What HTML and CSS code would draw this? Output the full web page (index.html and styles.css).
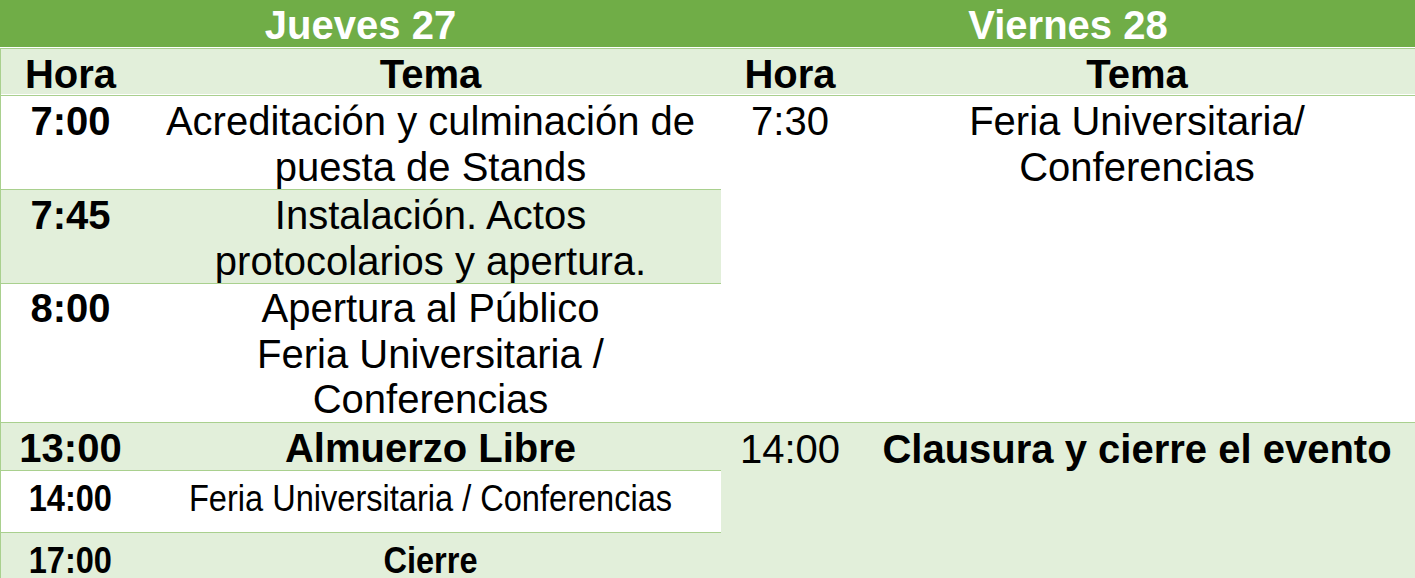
FILE: index.html
```html
<!DOCTYPE html>
<html lang="es">
<head>
<meta charset="utf-8">
<title>Programa</title>
<link rel="stylesheet" href="styles.css">
</head>
<body>
<div class="schedule">
  <section class="day day--thu">
    <div class="banner">Jueves 27</div>
    <div class="table">
      <div class="row row--head">
        <div class="cell">Hora</div>
        <div class="cell">Tema</div>
      </div>
      <div class="row row--two">
        <div class="cell time">7:00</div>
        <div class="cell topic">Acreditación y culminación de<br>puesta de Stands</div>
      </div>
      <div class="row row--two row--alt">
        <div class="cell time">7:45</div>
        <div class="cell topic">Instalación. Actos<br>protocolarios y apertura.</div>
      </div>
      <div class="row row--three">
        <div class="cell time">8:00</div>
        <div class="cell topic">Apertura al Público<br>Feria Universitaria /<br>Conferencias</div>
      </div>
      <div class="row row--one row--alt">
        <div class="cell time">13:00</div>
        <div class="cell topic topic--bold">Almuerzo Libre</div>
      </div>
      <div class="row row--narrow">
        <div class="cell time"><span class="condensed">14:00</span></div>
        <div class="cell topic"><span class="condensed">Feria Universitaria / Conferencias</span></div>
      </div>
      <div class="row row--end row--alt">
        <div class="cell time"><span class="condensed">17:00</span></div>
        <div class="cell topic topic--bold"><span class="condensed">Cierre</span></div>
      </div>
    </div>
  </section>
  <section class="day day--fri">
    <div class="banner">Viernes 28</div>
    <div class="table">
      <div class="row row--head">
        <div class="cell">Hora</div>
        <div class="cell">Tema</div>
      </div>
      <div class="row row--tall">
        <div class="cell time time--plain">7:30</div>
        <div class="cell topic">Feria Universitaria/<br>Conferencias</div>
      </div>
      <div class="row row--last row--alt">
        <div class="cell time time--plain">14:00</div>
        <div class="cell topic topic--bold">Clausura y cierre el evento</div>
      </div>
    </div>
  </section>
</div>
</body>
</html>
```

FILE: styles.css
```css
* {
  box-sizing: border-box;
  margin: 0;
  padding: 0;
}

body {
  margin: 0;
  width: 1415px;
  height: 578px;
  overflow: hidden;
  background: #ffffff;
  color: #000000;
  font-family: "Liberation Sans", Arial, sans-serif;
}

.schedule {
  display: flex;
  height: 578px;
}

.day {
  display: flex;
  flex-direction: column;
}

.day--thu {
  width: 721px;
}

.day--fri {
  flex: 1;
}

.banner {
  height: 48px;
  background: #70ad47;
  border-bottom: 1px solid #ffffff;
  color: #ffffff;
  font-size: 40px;
  font-weight: bold;
  line-height: 46px;
  padding-top: 2px;
  text-align: center;
}

.table {
  flex: 1;
  display: flex;
  flex-direction: column;
}

.day--thu .table {
  border-left: 1px solid #a9d08e;
}

.row {
  display: grid;
  grid-template-columns: 139px 1fr;
  border-top: 1px solid #a9d08e;
  background: #ffffff;
  font-size: 40px;
  line-height: 46px;
  padding-top: 2px;
  text-align: center;
}

.day--fri .row {
  grid-template-columns: 138px 1fr;
}

.row--alt {
  background: #e2efda;
}

.row--head {
  height: 47px;
  background: #e2efda;
  border-bottom: 1px solid #ffffff;
  font-weight: bold;
}

.row--two {
  height: 94px;
}

.row--three {
  height: 139px;
  line-height: 45.5px;
}

.row--one {
  height: 48px;
}

.row--narrow {
  height: 62px;
  padding-top: 3px;
}

.row--tall {
  height: 327px;
}

.row--last {
  flex: 1;
  padding-top: 3px;
}

.row--end {
  flex: 1;
  line-height: 36px;
  padding-top: 8px;
}

.cell {
  white-space: nowrap;
}

.time {
  font-weight: bold;
}

.time--plain {
  font-weight: normal;
}

.topic--bold {
  font-weight: bold;
}

.condensed {
  display: inline-block;
  font-size: 37px;
  transform: scaleX(0.88);
}
```
